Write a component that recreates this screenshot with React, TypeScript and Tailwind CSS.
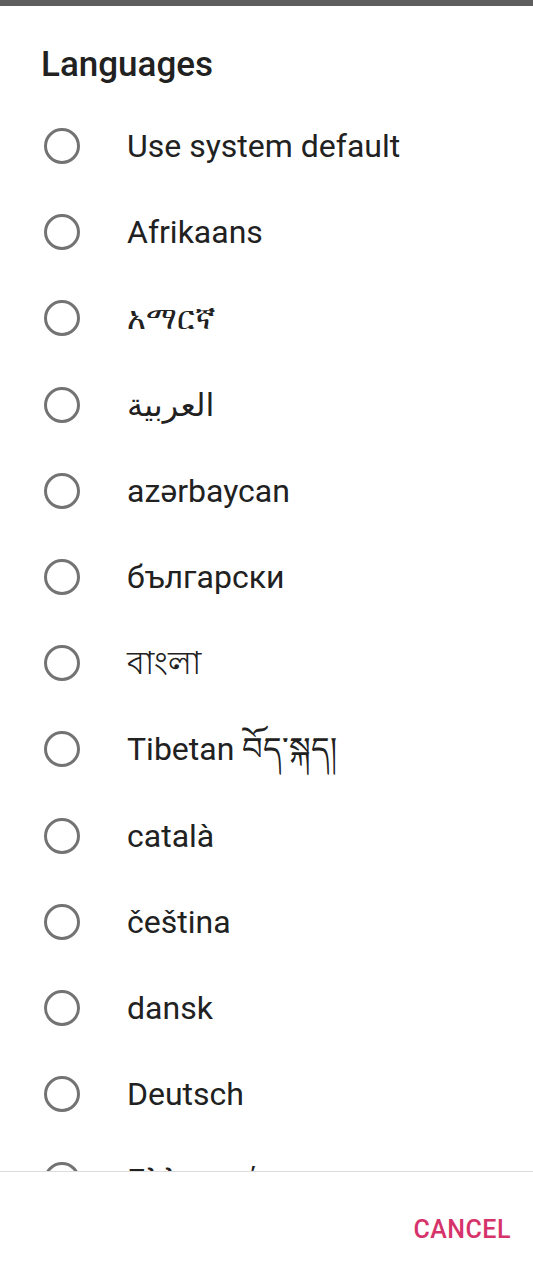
const languages = [
  "Use system default",
  "Afrikaans",
  "አማርኛ",
  "العربية",
  "azərbaycan",
  "български",
  "বাংলা",
  "Tibetan བོད་སྐད།",
  "català",
  "čeština",
  "dansk",
  "Deutsch",
  "Ελληνικά",
];

const App: React.FC = () => {
  return (
    <div className="w-[533px] h-[1280px] bg-white flex flex-col overflow-hidden font-['Roboto','Noto_Sans','DejaVu_Sans',sans-serif]">
      <div className="h-[6px] bg-[#5e5e5e] shrink-0" />
      <h1 className="h-[97px] shrink-0 pl-[41px] pt-[39px] text-[35px] leading-[40px] font-medium text-[#212121]">
        Languages
      </h1>
      <div className="h-[1068px] shrink-0 overflow-hidden">
        {languages.map((lang) => (
          <div key={lang} className="h-[86.2px] flex items-center">
            <div className="ml-[44px] w-[36px] h-[36px] rounded-full border-[3px] border-[#737373] shrink-0" />
            <span className="ml-[47px] text-[32px] leading-[40px] text-[#212121] whitespace-nowrap">{lang}</span>
          </div>
        ))}
      </div>
      <div className="h-px bg-[#dcdcdc] shrink-0" />
      <div className="flex-1 flex items-center justify-end pr-[22px] pt-[8px]">
        <button className="text-[25px] font-medium text-[#d6336a] tracking-[0.5px]">CANCEL</button>
      </div>
    </div>
  );
};

export default App;
